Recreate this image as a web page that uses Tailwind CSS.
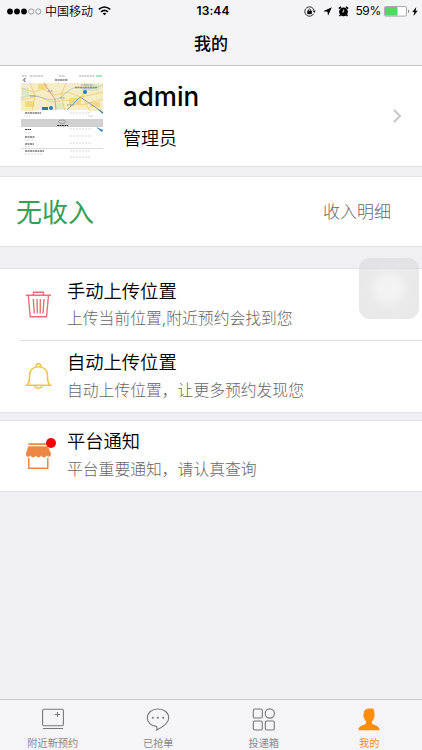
<!DOCTYPE html>
<html lang="zh-CN">
<head>
<meta charset="utf-8">
<title>我的</title>
<script src="https://cdn.jsdelivr.net/npm/@tailwindcss/browser@4"></script>
</head>
<body class="bg-[#efeff4] font-['Inter','Noto_Sans_CJK_SC',sans-serif] text-black">
<div class="relative flex h-[750px] w-[422px] flex-col overflow-hidden">
  <header class="h-[66px] shrink-0 border-b border-[#c4c4c8] bg-[#f4f4f7]">
    <div class="grid h-[22px] grid-cols-3 items-center pl-[7px] pr-[4px] text-[12px] leading-[20px]">
      <div class="flex items-center whitespace-nowrap">
        <svg class="mr-[3px] h-[7px] w-[35px]" viewBox="0 0 35 7"><g fill="#000"><circle cx="3" cy="3.5" r="2.9"/><circle cx="10" cy="3.5" r="2.9"/><circle cx="17" cy="3.5" r="2.9"/></g><g fill="none" stroke="#777" stroke-width=".7"><circle cx="24.2" cy="3.5" r="2.6"/><circle cx="31.3" cy="3.5" r="2.6"/></g></svg>
        <span class="pt-[2px] font-[350]">中国移动</span>
        <svg class="ml-[5px] h-[10px] w-[13px]" viewBox="0 0 13 10" fill="none" stroke="#000" stroke-width="1.6"><path d="M.8 3.4Q6.5-1.4 12.2 3.4M3 5.8Q6.5 2.8 10 5.8"/><path d="M4.6 7.4Q6.5 5.9 8.4 7.4L6.5 9.3Z" fill="#000" stroke="none"/></svg>
      </div>
      <div class="pl-[1px] text-center text-[12px] font-semibold tracking-[.1px]">13:44</div>
      <div class="flex items-center justify-end">
        <svg class="h-[11px] w-[12px]" viewBox="0 0 12 11"><path d="M9.7 7.6A4.7 4.7 0 1 1 10 4.2" fill="none" stroke="#222" stroke-width=".9"/><path d="M8.4 4.5h3.4L10.2 7Z" fill="#222"/><rect x="3.3" y="4.8" width="4.5" height="3.3"/><path d="M4.3 5V3.8q1.2-1.8 2.4 0V5" fill="none" stroke="#000" stroke-width=".8"/></svg>
        <svg class="ml-[7px] h-[9px] w-[9px]" viewBox="0 0 9 9"><path d="M8.8.2 5 8.8 4.5 4.7.2 4.2Z"/></svg>
        <svg class="ml-[6px] h-[11px] w-[11px]" viewBox="0 0 11 11"><circle cx="5.5" cy="5.8" r="4.4"/><path d="M.9 2.6 3 .9M10.1 2.6 8 .9M2.4 8.9 1.6 10.1M8.6 8.9l.8 1.2" stroke="#000" stroke-width="1.5"/><path d="M5.7 3.4v2.5H4" fill="none" stroke="#fff" stroke-width=".8"/></svg>
        <span class="ml-[6px] text-[12px] tracking-[-.3px]">59%</span>
        <svg class="ml-[3px] h-[11px] w-[26px]" viewBox="0 0 26 11"><rect x=".5" y=".5" width="22" height="9.6" rx="1.5" fill="#fff" stroke="#888" stroke-width=".7"/><path d="M1 1h12.5v8.6H1Z" fill="#4cd964"/><path d="M24 3.5q2 1.8 0 3.6Z" fill="#666"/></svg>
        <svg class="ml-[2px] h-[9px] w-[6px]" viewBox="0 0 6 9"><path d="M4.3 0 .3 5h2L1.5 9l4.2-5.2H3.6Z"/></svg>
      </div>
    </div>
    <h1 class="pt-[1px] text-center text-[17px] font-medium leading-[42px]">我的</h1>
  </header>

  <section class="flex h-[101px] shrink-0 items-start border-b border-[#dedee3] bg-white pl-[21px] pt-[9px]">
    <svg class="h-[83px] w-[82px] shrink-0" viewBox="0 0 82 83">
      <path d="M0 8h82v28H0Z" fill="#f6edc5"/>
      <g fill="#f3d983"><path d="M17 9h9v5h-9zM48 23h12v7H48zM4 26h9v6H4zM69 27h10v5H69z"/></g>
      <g fill="#dce8c5"><path d="M34 28h9v6h-9zM64 9h14v7H64zM1 13h7v7H1z"/></g>
      <g fill="none" stroke="#efc96d" stroke-width=".8"><path d="M0 13 12 17 22 14 34 20 47 17 60 22 82 17M0 25l17-4 13 6 18-2 13 5 21-6M9 8l5 13-3 15M45 8l-5 12 4 16M65 8l-4 14 8 14"/></g>
      <path d="M23 8l6 9 5 7 1 12" fill="none" stroke="#de8b83" stroke-width=".8"/>
      <path d="M45 36 59 22 80 36" fill="none" stroke="#899fad" stroke-width="1"/>
      <path d="M0 23q9-5 22 0t22-4 17-6 21-3" fill="none" stroke="#96b9c8" stroke-width=".6"/>
      <path d="M0 36 32 35h33l17 3v6H0Z" fill="#fff"/>
      <g fill="#237bbd"><circle cx="64" cy="17" r="2"/><circle cx="30" cy="33" r="2"/><path d="M21 32h6v3h-6zM76 34l6 3v2zM75 52l7 3-1 2z"/></g>
      <path d="M27 16h5M39 23h5M46 30h7M9 21h6M60 10h12" stroke="#526cb2" stroke-width="1.2" stroke-dasharray="1 .5" opacity=".75"/>
      <path d="M54 12.5h22" stroke="#888" stroke-width="1.5" stroke-dasharray="2 .5"/>
      <path d="M0 44h82v8H0Z" fill="#d1d1d2"/>
      <ellipse cx="41" cy="46.7" rx="3.5" ry="1.7" fill="none" stroke="#777" stroke-width=".6"/>
      <g stroke="#333" stroke-width="1.2" stroke-dasharray="2 .5"><path d="M34 5h13M4 38h16M36 50.5h11M4 54.5h6M4 62h10M4 69h9M4 76h19"/></g>
      <path d="M1 1h5M9 1h13M38 1h6M58 1h16" stroke="#888" stroke-width=".8" stroke-dasharray="2 .7"/><path d="M75 1h6" stroke="#56c77a"/>
      <path d="M4.5 3 2.5 5l2 2" fill="none" stroke="#333"/>
      <g stroke="#c4c4c4" stroke-width=".7" stroke-dasharray="2 1"><path d="M49 38h20M49 54h22M49 61h22M49 68h22M49 76h21M4 41h6M4 58h6M4 65h9M4 71.5h5M4 79h17M49 82h20"/></g>
      <path d="M0 73.5h82" stroke="#ccc" stroke-width=".7"/><path d="m67 40 2 2 3-2" fill="none" stroke="#aaa" stroke-width=".5"/>
    </svg>
    <div class="ml-[20px] flex-1">
      <div class="pt-[5px] text-[26px] font-medium leading-[34px]">admin</div>
      <div class="pt-[12px] text-[18px] font-[350] leading-[26px]">管理员</div>
    </div>
    <svg class="mr-[20px] mt-[34px] h-[14px] w-[9px]" viewBox="0 0 9 14" fill="none" stroke="#c7c7cc" stroke-width="2"><path d="m1 1 6 6-6 6"/></svg>
  </section>

  <section class="mt-[9px] flex h-[71px] shrink-0 items-center justify-between border-y border-[#e2e2e7] bg-white pl-[16px] pr-[31px]">
    <div class="pt-[2px] text-[26px] leading-[36px] text-[#35a055]">无收入</div>
    <div class="pt-[1px] text-[17px] font-light leading-[26px] text-[#666]">收入明细</div>
  </section>

  <section class="mt-[21px] shrink-0 border-y border-[#e2e2e7] bg-white">
    <div class="flex h-[71px] pl-[20px]">
      <svg class="ml-[5px] mt-[22px] h-[28px] w-[27px]" viewBox="0 0 27 28" fill="none" stroke="#e96f78" stroke-width="1.4"><path d="M1 4.3h25M8.5 4V1.3h10V4M3.3 4.5l1.9 21.2h16.3l2-21.2M8.3 8l1 14.5M12 8l.4 14.5M15.4 8l-.2 14.5M19 8l-1 14.5"/></svg>
      <div class="ml-[15px] pt-[8px]"><div class="text-[18.3px] font-[350] leading-[28px]">手动上传位置</div><div class="text-[15.8px] font-light leading-[27px] text-[#666]">上传当前位置,附近预约会找到您</div></div>
    </div>
    <div class="ml-[20px] flex h-[72px] border-t border-[#dedee3]">
      <svg class="ml-[5px] mt-[22px] h-[28px] w-[27px]" viewBox="0 0 27 28" fill="none" stroke="#f0c544" stroke-width="1.5"><path d="M11.4 3.5a2.2 2.2 0 1 1 4.2 0M1.5 22.3c3.2-2.3 3-5.1 3-9.3C4.5 7 8.2 3.7 13.5 3.7S22.5 7 22.5 13c0 4.2-.2 7 3 9.3ZM9.7 22.5c.5 3.5 7.1 3.5 7.6 0"/></svg>
      <div class="ml-[15px] pt-[7px]"><div class="text-[18.3px] font-[350] leading-[28px]">自动上传位置</div><div class="pt-[1px] text-[15.8px] font-light leading-[27px] text-[#666]">自动上传位置，让更多预约发现您</div></div>
    </div>
  </section>

  <section class="mt-[7px] flex h-[72px] shrink-0 border-y border-[#e2e2e7] bg-white pl-[25px]">
    <div class="relative mt-[22px] h-[28px] w-[27px]">
      <svg class="h-[28px] w-[27px]" viewBox="0 0 27 28"><path d="M3.5.2h19v1.7h-19ZM3.3 3.3h19.4L26 10.5c.4 3-2.6 4.4-4.5 2-1.2 2.5-4.2 2.5-5.3 0-1.2 2.5-4.2 2.5-5.4 0-1.1 2.5-4.1 2.5-5.3 0-2.2 2.3-5.2 1-4.5-2Z" fill="#ee8744"/><path d="M3.8 15v10.3h19V15" fill="none" stroke="#ee8744" stroke-width="1.5"/></svg>
      <i class="absolute left-[21px] top-[-5px] h-[10px] w-[10px] rounded-full bg-[#fb0006]"></i>
    </div>
    <div class="ml-[15px] pt-[6px]"><div class="text-[18.3px] font-[350] leading-[28px]">平台通知</div><div class="pt-[1px] text-[15.8px] font-light leading-[27px] text-[#666]">平台重要通知，请认真查询</div></div>
  </section>

  <nav class="mt-auto grid h-[51px] shrink-0 grid-cols-4 border-t border-[#c7c7cd] bg-[#f5f5f9] text-[10.2px] leading-[15px] text-[#888]">
    <div class="flex flex-col items-center pt-[8px]">
      <svg class="h-[23px] w-[24px]" viewBox="0 0 24 23" fill="none" stroke="#777" stroke-width="1.1"><rect x="1.6" y="1.2" width="20.8" height="16.5" rx="1.5"/><path d="M2 20.5h20M14 6.5h5M16.5 4v5"/></svg><span class="mt-[5px]">附近新预约</span>
    </div>
    <div class="flex flex-col items-center pt-[8px]">
      <svg class="h-[23px] w-[24px]" viewBox="0 0 24 23"><path d="M10.3 18.4C5 17.8 1.3 14.4 1.3 9.9 1.3 4.8 5.9 1 12 1s10.7 3.8 10.7 8.9c0 4.5-4.8 8.5-12 12 .7-1.3.6-2.3-.4-3.5Z" fill="none" stroke="#777" stroke-width="1.1"/><g fill="#777"><circle cx="6.8" cy="9.7" r="1"/><circle cx="12" cy="9.7" r="1"/><circle cx="17.2" cy="9.7" r="1"/></g></svg><span class="mt-[5px]">已抢单</span>
    </div>
    <div class="flex flex-col items-center pt-[8px]">
      <svg class="h-[23px] w-[24px]" viewBox="0 0 24 23" fill="none" stroke="#777" stroke-width="1.1"><rect x="1.3" y="1" width="9" height="9" rx="1.5"/><circle cx="17.8" cy="5.5" r="4.6"/><rect x="1.3" y="13" width="9" height="9" rx="1.5"/><rect x="13.3" y="13" width="9" height="9" rx="1.5"/></svg><span class="mt-[5px]">投递箱</span>
    </div>
    <div class="flex flex-col items-center pt-[8px] text-[#ff8c0a]">
      <svg class="h-[23px] w-[24px]" viewBox="0 0 24 23" fill="currentColor"><path d="M7 3.2C9 .3 12 .5 16.8.7 16 2 17.6 2.5 17.4 5.5l.2 2.6c.2 1-.4 1.3-.8 1.8-.3 1.7-1 2.7-1.9 3.4v2.2c.8 1.7 7.1 1.2 7.9 6.7H1.2c.8-5.5 7.1-5 7.9-6.7v-2.2c-.9-.7-1.5-1.7-1.9-3.4-.5-.5-1-1-.8-1.8Z"/></svg><span class="mt-[5px]">我的</span>
    </div>
  </nav>

  <div class="absolute left-[359px] top-[258px] h-[61px] w-[60px] rounded-[11px] bg-[radial-gradient(circle,rgba(242,242,242,.9)_0%,rgba(240,240,240,.85)_23%,rgba(221,221,223,.62)_50%,rgba(216,216,218,.6)_100%)]"></div>
</div>
</body>
</html>
